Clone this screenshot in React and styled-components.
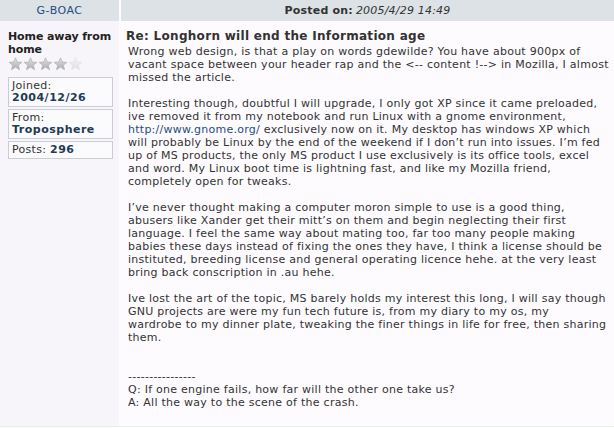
import React from 'react';
import styled, { createGlobalStyle } from 'styled-components';

const GlobalStyle = createGlobalStyle`
  html, body {
    margin: 0;
    padding: 0;
    background: #fdfbfe;
  }
  body {
    font-family: "DejaVu Sans", Verdana, sans-serif;
    font-size: 11px;
    color: #333;
  }
`;

const Table = styled.div`
  width: 614px;
  height: 426px;
  display: grid;
  grid-template-columns: 119px 1fr;
  grid-template-rows: 21px 1fr;
  column-gap: 2px;
  background: #fdfbfe;
  border-bottom: 1px solid #e9efe9;
  overflow: hidden;
`;

const HeadCell = styled.div`
  background: #dde2e6;
  display: flex;
  align-items: center;
  justify-content: center;
  font-size: 11px;
  color: ${props => props.$blue ? '#1f4d80' : '#333'};
  letter-spacing: ${props => props.$blue ? '0.5px' : '0.2px'};
`;

const Label = styled.b`
  font-weight: 700;
`;

const DateText = styled.i`
  font-style: italic;
  margin-left: 3px;
`;

const Side = styled.div`
  background: #f8f5fa;
  padding: 9px 0 0 8px;
`;

const Rank = styled.div`
  font-weight: 700;
  color: #222;
  line-height: 13px;
  width: 110px;
  letter-spacing: -0.1px;
`;

const Stars = styled.div`
  display: flex;
  margin: 1px 0 6px 0;
`;

const InfoBox = styled.div`
  width: 97px;
  border: 1px solid #c9ced4;
  background: #fbfbfd;
  padding: 2px 3px;
  margin-bottom: 2px;
  line-height: 12px;
  color: #333;
  letter-spacing: 0.3px;
`;

const Value = styled.b`
  font-weight: 700;
  color: #233a52;
  letter-spacing: 0.5px;
`;

const Main = styled.div`
  padding: 8px 2px 0 5px;
`;

const Title = styled.h2`
  margin: 0 0 2px 0;
  font-size: 12px;
  font-weight: 700;
  color: #333;
  line-height: 14px;
  letter-spacing: 0.3px;
`;

const Para = styled.p`
  margin: 0 0 ${props => props.$gap || 13}px 2px;
  line-height: 13px;
  color: #333;
  letter-spacing: 0.26px;
  white-space: nowrap;
`;

const Link = styled.a`
  color: #1f4d80;
  text-decoration: none;
`;

function Star({ dim }) {
  const id = dim ? 'sd' : 'sf';
  return (
    <svg width="15" height="14" viewBox="0 0 15 14">
      <defs>
        <linearGradient id={id} x1="0" y1="0" x2="0" y2="1">
          <stop offset="0" stopColor={dim ? '#f4f4f4' : '#e6e6e6'} />
          <stop offset="1" stopColor={dim ? '#dedede' : '#a9a9a9'} />
        </linearGradient>
      </defs>
      <path
        d="M7.5 0.8 L9.3 5.1 L13.9 5.3 L10.3 8.2 L11.5 12.7 L7.5 10.1 L3.5 12.7 L4.7 8.2 L1.1 5.3 L5.7 5.1 Z"
        fill={`url(#${id})`}
        stroke={dim ? '#e2e2e2' : '#b4b4b4'}
        strokeWidth="0.8"
      />
    </svg>
  );
}

export default function App() {
  return (
    <>
      <GlobalStyle />
      <Table>
        <HeadCell $blue>G-BOAC</HeadCell>
        <HeadCell>
          <Label>Posted on:</Label>
          <DateText>2005/4/29 14:49</DateText>
        </HeadCell>

        <Side>
          <Rank>Home away from home</Rank>
          <Stars>
            <Star />
            <Star />
            <Star />
            <Star />
            <Star dim />
          </Stars>
          <InfoBox>
            Joined:<br />
            <Value>2004/12/26</Value>
          </InfoBox>
          <InfoBox>
            From:<br />
            <Value>Troposphere</Value>
          </InfoBox>
          <InfoBox>
            Posts: <Value>296</Value>
          </InfoBox>
        </Side>

        <Main>
          <Title>Re: Longhorn will end the Information age</Title>
          <Para>
            Wrong web design, is that a play on words gdewilde? You have about 900px of<br />
            vacant space between your header rap and the &lt;-- content !--&gt; in Mozilla, I almost<br />
            missed the article.
          </Para>
          <Para>
            Interesting though, doubtful I will upgrade, I only got XP since it came preloaded,<br />
            ive removed it from my notebook and run Linux with a gnome environment,<br />
            <Link href="#">http://www.gnome.org/</Link> exclusively now on it. My desktop has windows XP which<br />
            will probably be Linux by the end of the weekend if I don’t run into issues. I’m fed<br />
            up of MS products, the only MS product I use exclusively is its office tools, excel<br />
            and word. My Linux boot time is lightning fast, and like my Mozilla friend,<br />
            completely open for tweaks.
          </Para>
          <Para>
            I’ve never thought making a computer moron simple to use is a good thing,<br />
            abusers like Xander get their mitt’s on them and begin neglecting their first<br />
            language. I feel the same way about mating too, far too many people making<br />
            babies these days instead of fixing the ones they have, I think a license should be<br />
            instituted, breeding license and general operating licence hehe. at the very least<br />
            bring back conscription in .au hehe.
          </Para>
          <Para $gap={26}>
            Ive lost the art of the topic, MS barely holds my interest this long, I will say though<br />
            GNU projects are were my fun tech future is, from my diary to my os, my<br />
            wardrobe to my dinner plate, tweaking the finer things in life for free, then sharing<br />
            them.
          </Para>
          <Para>
            ----------------<br />
            Q: If one engine fails, how far will the other one take us?<br />
            A: All the way to the scene of the crash.
          </Para>
        </Main>
      </Table>
    </>
  );
}
